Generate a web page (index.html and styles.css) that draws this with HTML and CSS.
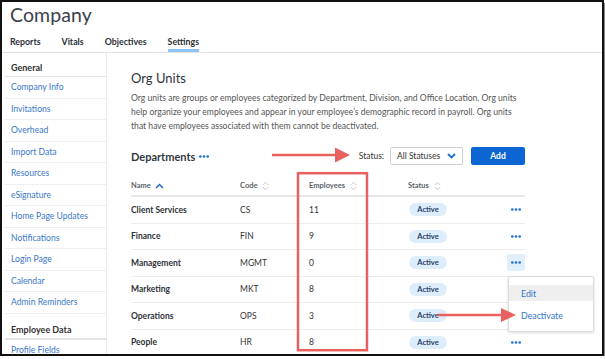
FILE: index.html
```html
<!DOCTYPE html>
<html>
<head>
<meta charset="utf-8">
<link rel="stylesheet" href="styles.css">
</head>
<body>
<div class="frame">
  <header class="top">
    <h1 class="title">Company</h1>
    <nav class="tabs">
      <span class="tab">Reports</span>
      <span class="tab">Vitals</span>
      <span class="tab">Objectives</span>
      <span class="tab active">Settings</span>
    </nav>
  </header>
  <div class="body">
    <aside class="side">
      <div class="side-head">General</div>
      <a class="side-item">Company Info</a>
      <a class="side-item">Invitations</a>
      <a class="side-item">Overhead</a>
      <a class="side-item">Import Data</a>
      <a class="side-item">Resources</a>
      <a class="side-item">eSignature</a>
      <a class="side-item">Home Page Updates</a>
      <a class="side-item">Notifications</a>
      <a class="side-item">Login Page</a>
      <a class="side-item">Calendar</a>
      <a class="side-item">Admin Reminders</a>
      <div class="side-head second">Employee Data</div>
      <a class="side-item">Profile Fields</a>
    </aside>
    <main class="main">
      <h2 class="h2">Org Units</h2>
      <p class="desc">Org units are groups or employees categorized by Department, Division, and Office Location. Org units help organize your employees and appear in your employee’s demographic record in payroll. Org units that have employees associated with them cannot be deactivated.</p>
      <div class="toolbar">
        <div class="dept">Departments <svg class="dots" width="10" height="3" viewBox="0 0 10 3"><circle cx="1.3" cy="1.5" r="1.3"/><circle cx="5" cy="1.5" r="1.3"/><circle cx="8.7" cy="1.5" r="1.3"/></svg></div>
        <div class="filters">
          <span class="status-label">Status:</span>
          <div class="select">All Statuses <svg width="9" height="6" viewBox="0 0 9 6"><path d="M1 1 L4.5 4.5 L8 1" fill="none" stroke="#1a6fd1" stroke-width="1.8"/></svg></div>
          <button class="add">Add</button>
        </div>
      </div>
      <div class="table">
        <div class="row head">
          <div class="th">Name <svg width="9" height="6" viewBox="0 0 9 6"><path d="M1 5 L4.5 1.5 L8 5" fill="none" stroke="#1a6fd1" stroke-width="1.5"/></svg></div>
          <div class="th">Code <svg class="sort" width="7" height="10" viewBox="0 0 7 10"><path d="M1 3.8 L3.5 1.3 L6 3.8 M1 6.2 L3.5 8.7 L6 6.2" fill="none" stroke="#c4c4c4" stroke-width="1"/></svg></div>
          <div class="th">Employees <svg class="sort" width="7" height="10" viewBox="0 0 7 10"><path d="M1 3.8 L3.5 1.3 L6 3.8 M1 6.2 L3.5 8.7 L6 6.2" fill="none" stroke="#c4c4c4" stroke-width="1"/></svg></div>
          <div class="th">Status <svg class="sort" width="7" height="10" viewBox="0 0 7 10"><path d="M1 3.8 L3.5 1.3 L6 3.8 M1 6.2 L3.5 8.7 L6 6.2" fill="none" stroke="#c4c4c4" stroke-width="1"/></svg></div>
          <div class="th"></div>
        </div>
        <div class="row">
          <div class="name">Client Services</div><div>CS</div><div>11</div>
          <div><span class="pill">Active</span></div>
          <div class="act"><span class="more"><svg class="dots" width="10" height="3" viewBox="0 0 10 3"><circle cx="1.3" cy="1.5" r="1.3"/><circle cx="5" cy="1.5" r="1.3"/><circle cx="8.7" cy="1.5" r="1.3"/></svg></span></div>
        </div>
        <div class="row">
          <div class="name">Finance</div><div>FIN</div><div>9</div>
          <div><span class="pill">Active</span></div>
          <div class="act"><span class="more"><svg class="dots" width="10" height="3" viewBox="0 0 10 3"><circle cx="1.3" cy="1.5" r="1.3"/><circle cx="5" cy="1.5" r="1.3"/><circle cx="8.7" cy="1.5" r="1.3"/></svg></span></div>
        </div>
        <div class="row">
          <div class="name">Management</div><div>MGMT</div><div>0</div>
          <div><span class="pill">Active</span></div>
          <div class="act"><span class="more open"><svg class="dots" width="10" height="3" viewBox="0 0 10 3"><circle cx="1.3" cy="1.5" r="1.3"/><circle cx="5" cy="1.5" r="1.3"/><circle cx="8.7" cy="1.5" r="1.3"/></svg>
            <div class="menu">
              <div class="menu-item hover">Edit</div>
              <div class="menu-item">Deactivate</div>
            </div></span></div>
        </div>
        <div class="row">
          <div class="name">Marketing</div><div>MKT</div><div>8</div>
          <div><span class="pill">Active</span></div>
          <div class="act"></div>
        </div>
        <div class="row">
          <div class="name">Operations</div><div>OPS</div><div>3</div>
          <div><span class="pill">Active</span></div>
          <div class="act"></div>
        </div>
        <div class="row">
          <div class="name">People</div><div>HR</div><div>8</div>
          <div><span class="pill">Active</span></div>
          <div class="act"><span class="more"><svg class="dots" width="10" height="3" viewBox="0 0 10 3"><circle cx="1.3" cy="1.5" r="1.3"/><circle cx="5" cy="1.5" r="1.3"/><circle cx="8.7" cy="1.5" r="1.3"/></svg></span></div>
        </div>
      </div>
    </main>
  </div>
  <svg class="annot" width="604" height="356" viewBox="0 0 604 356">
    <rect x="298" y="173.2" width="69" height="177" fill="none" stroke="#e8615f" stroke-width="2.5"/>
    <line x1="272" y1="155" x2="337" y2="155" stroke="#e8615f" stroke-width="2.5"/>
    <polygon points="335,147.5 350,155 335,162.5" fill="#e8615f"/>
    <line x1="438" y1="315" x2="503" y2="315" stroke="#e8615f" stroke-width="2.5"/>
    <polygon points="501,308 516,315 501,322" fill="#e8615f"/>
  </svg>
</div>
</body>
</html>
```
FILE: styles.css
```css
* { box-sizing: border-box; }
html, body { margin: 0; padding: 0; background: #fff; }
body { font-family: Lato, "Open Sans", sans-serif; color: #333; }

.frame {
  position: relative;
  width: 604px;
  height: 356px;
  border: 2px solid #111;
  box-shadow: 2px 3px 0 #8a8a8a;
  overflow: hidden;
  background: #fff;
}

.top { padding: 0 0 0 8px; border-bottom: 1px solid #e3e3e3; }
.title {
  margin: 0;
  padding-top: 1px;
  font-size: 19.5px;
  line-height: 24px;
  font-weight: 400;
  color: #3b4149;
  letter-spacing: 0.1px;
}
.tabs { display: flex; margin-top: 7px; height: 18px; }
.tab {
  font-size: 8.8px;
  font-weight: 700;
  color: #2b2f36;
  line-height: 14px;
  padding-top: 1px;
  margin-right: 21px;
}
.tab.active { border-bottom: 3px solid #8dc4f7; height: 18px; }

.body { display: flex; }
.side {
  width: 102px;
  margin-left: 3px;
  border-right: 1px solid #ececec;
  height: 310px;
}
.side-head {
  height: 24px;
  padding: 5px 0 0 6px;
  display: flex;
  align-items: center;
  font-size: 9px;
  font-weight: 700;
  color: #333;
  border-bottom: 1px solid #e4e4e4;
}
.side-head.second {
  height: 26px;
  padding-top: 7px;
  border-bottom: 2px solid #e4e4e4;
}
.side-item {
  display: flex;
  align-items: center;
  height: 21.5px;
  padding-left: 6px;
  font-size: 8.6px;
  color: #3a78c9;
  border-bottom: 1px solid #efefef;
}

.main { padding: 16px 0 0 24px; width: 418px; }
.h2 { margin: 0; font-size: 13px; line-height: 18px; font-weight: 400; color: #2f343a; }
.desc {
  margin: 4px 0 0;
  font-size: 8.6px;
  line-height: 14px;
  color: #555;
  width: 394px;
}
.toolbar {
  margin-top: 14px;
  width: 394px;
  height: 18px;
  display: flex;
  align-items: center;
  justify-content: space-between;
}
.dept { font-size: 11px; font-weight: 700; color: #33383f; display: flex; align-items: center; gap: 4px; }
.dots { fill: #1a6fd1; display: block; }
.filters { display: flex; align-items: center; }
.status-label { font-size: 8.5px; color: #333; margin-right: 6px; }
.select {
  width: 73px;
  height: 18px;
  border: 1px solid #cfcfcf;
  border-radius: 2px;
  display: flex;
  align-items: center;
  justify-content: space-between;
  padding: 0 6px 0 6px;
  font-size: 8.5px;
  color: #333;
}
.add {
  margin-left: 8px;
  width: 54px;
  height: 18px;
  border: 0;
  border-radius: 2px;
  background: #0b66d3;
  color: #fff;
  font-family: inherit;
  font-size: 8.5px;
  font-weight: 700;
  padding: 0;
}

.table { margin-top: 11px; width: 394px; }
.row {
  display: grid;
  grid-template-columns: 109px 69px 99px 99px 18px;
  align-items: center;
  height: 26.5px;
  border-bottom: 1px solid #ececec;
  font-size: 8.5px;
  color: #333;
}
.row.head { height: 21px; border-bottom: 2px solid #e6e6e6; }
.th { font-size: 7.5px; font-weight: 700; color: #5a5f66; display: flex; align-items: center; gap: 4px; }
.th .sort { margin-left: 1px; }
.name { font-weight: 700; color: #2e3238; }
.pill {
  display: inline-block;
  margin-left: 1px;
  width: 38px;
  height: 13px;
  line-height: 13px;
  border-radius: 7px;
  background: #deedfb;
  color: #1f3f69;
  font-size: 7.5px;
  font-weight: 700;
  text-align: center;
}
.act { display: flex; }
.more {
  position: relative;
  width: 18px;
  height: 17px;
  display: flex;
  align-items: center;
  justify-content: center;
  border-radius: 2px;
}
.more.open { background: #e1effb; }
.menu {
  position: absolute;
  left: 1px;
  top: 22px;
  width: 86px;
  height: 56px;
  padding-top: 8px;
  background: #fff;
  border: 1px solid #dcdcdc;
  border-radius: 2px;
  box-shadow: 0 1px 3px rgba(0,0,0,0.15);
  z-index: 2;
}
.menu-item {
  height: 16px;
  display: flex;
  align-items: center;
  padding-left: 12px;
  font-size: 8.8px;
  color: #2f74cc;
}
.menu-item.hover { background: #efefef; }
.menu-item + .menu-item { margin-top: 6px; height: 17px; }

.annot { position: absolute; left: -2px; top: -2px; z-index: 5; pointer-events: none; }
```
